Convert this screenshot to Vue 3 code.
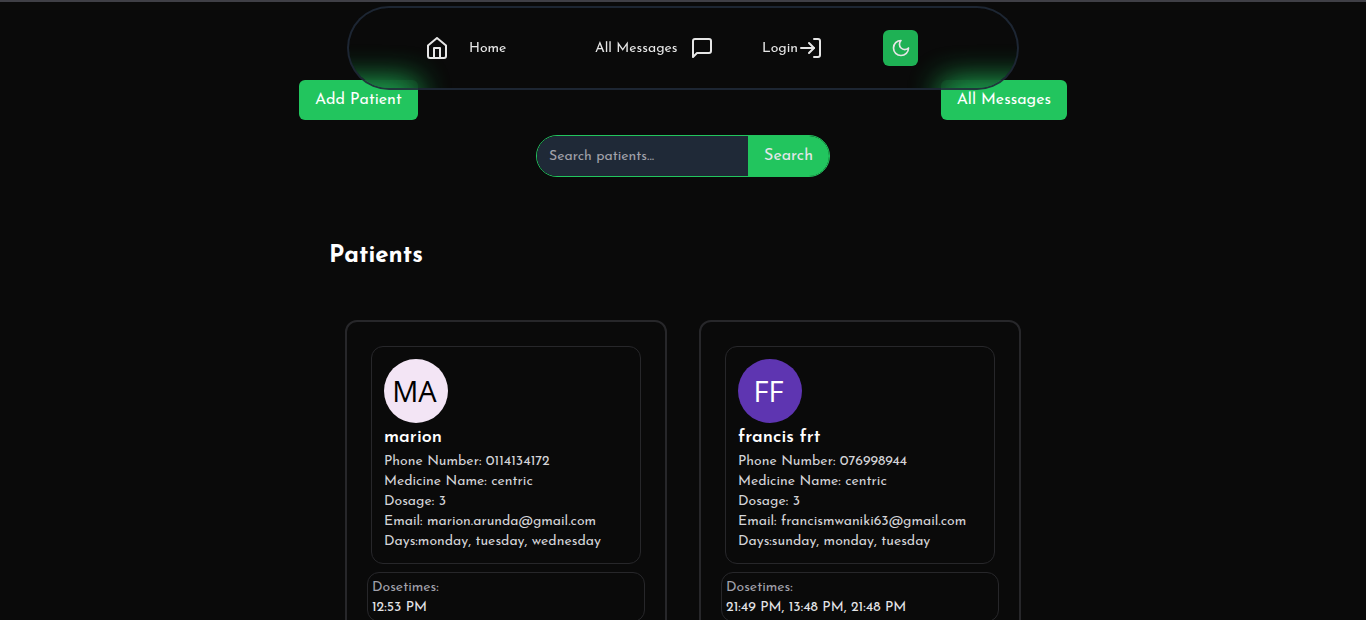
<script setup>
import { ref } from 'vue'

const query = ref('')

const patients = [
  {
    name: 'marion',
    initials: 'MA',
    tone: 'light',
    phone: '0114134172',
    medicine: 'centric',
    dosage: 3,
    email: 'marion.arunda@gmail.com',
    days: 'monday, tuesday, wednesday',
    times: '12:53 PM',
  },
  {
    name: 'francis frt',
    initials: 'FF',
    tone: 'violet',
    phone: '076998944',
    medicine: 'centric',
    dosage: 3,
    email: 'francismwaniki63@gmail.com',
    days: 'sunday, monday, tuesday',
    times: '21:49 PM, 13:48 PM, 21:48 PM',
  },
]
</script>

<template>
  <div class="page">
    <nav class="navbar">
      <a href="#" class="nav-link home">
        <svg class="icon" viewBox="0 0 24 24" aria-hidden="true">
          <path d="M3 9.500 12 2l9 7.500V20a2 2 0 0 1-2 2H5a2 2 0 0 1-2-2z" />
          <path d="M9 22V12h6v10" />
        </svg>
        <span>Home</span>
      </a>
      <a href="#" class="nav-link messages">
        <span>All Messages</span>
        <svg class="icon" viewBox="0 0 24 24" aria-hidden="true">
          <path d="M21 15a2 2 0 0 1-2 2H7l-4 4V5a2 2 0 0 1 2-2h14a2 2 0 0 1 2 2z" />
        </svg>
      </a>
      <a href="#" class="nav-link login">
        <span>Login</span>
        <svg class="icon" viewBox="0 0 24 24" aria-hidden="true">
          <path d="M15 3h4a2 2 0 0 1 2 2v14a2 2 0 0 1-2 2h-4" />
          <path d="m10 17 5-5-5-5" />
          <path d="M15 12H2" />
        </svg>
      </a>
      <button type="button" class="theme" aria-label="Toggle theme">
        <svg class="moon" viewBox="0 0 24 24" aria-hidden="true">
          <path d="M12 3a6 6 0 0 0 9 9 9 9 0 1 1-9-9Z" />
        </svg>
      </button>
    </nav>

    <div class="actions">
      <button type="button" class="action">Add Patient</button>
      <button type="button" class="action">All Messages</button>
    </div>

    <form class="search" @submit.prevent>
      <input v-model="query" type="text" placeholder="Search patients..." aria-label="Search patients" />
      <button type="submit">Search</button>
    </form>

    <main class="content">
      <h1>Patients</h1>
      <div class="grid">
        <article v-for="p in patients" :key="p.email" class="card">
          <div class="details">
            <div class="avatar" :class="p.tone">{{ p.initials }}</div>
            <h2>{{ p.name }}</h2>
            <p>Phone Number: {{ p.phone }}</p>
            <p>Medicine Name: {{ p.medicine }}</p>
            <p>Dosage: {{ p.dosage }}</p>
            <p>Email: {{ p.email }}</p>
            <p>Days:{{ p.days }}</p>
          </div>
          <div class="doses">
            <p class="label">Dosetimes:</p>
            <p>{{ p.times }}</p>
          </div>
        </article>
      </div>
    </main>
  </div>
</template>

<style>
body {
  background: #0a0a0a;
}
</style>

<style scoped>
* {
  box-sizing: border-box;
  margin: 0;
}
.page {
  height: 100vh;
  overflow: hidden;
  padding-top: 78px;
  border-top: 2px solid #3f3f46;
  background: #0a0a0a;
  color: #fff;
  font-family: "Josefin Sans", Lato, sans-serif;
  font-size: 14px;
  line-height: 20px;
}
button,
input {
  border: 0;
  color: inherit;
  font: inherit;
}
svg {
  fill: none;
  stroke: currentColor;
  stroke-width: 2;
  stroke-linecap: round;
  stroke-linejoin: round;
}
.navbar {
  position: fixed;
  z-index: 2;
  top: 6px;
  left: 0;
  right: 0;
  display: grid;
  grid-template-columns: 170fr 167fr 121fr 35fr;
  align-items: center;
  max-width: 672px;
  height: 84px;
  margin: 0 auto;
  padding: 0 99px 0 76px;
  overflow: hidden;
  border: 2px solid rgba(31, 41, 55, 0.9);
  border-radius: 42px;
  background: rgba(10, 10, 10, 0.9);
  background-clip: padding-box;
}
/* Soft green glow where the action buttons pass under the bar. */
.navbar::before {
  content: "";
  position: absolute;
  z-index: -1;
  top: 72px;
  left: -50px;
  right: -50px;
  height: 40px;
  background: linear-gradient(
    90deg,
    #22c55e 119px,
    transparent 119px calc(100% - 126px),
    #22c55e calc(100% - 126px)
  );
  filter: blur(16px);
  opacity: 0.9;
}
.nav-link {
  display: flex;
  align-items: center;
  color: #fff;
  text-decoration: none;
  white-space: nowrap;
  opacity: 0.9;
}
.nav-link span {
  padding-top: 2px;
}
.home {
  gap: 20px;
}
.messages {
  gap: 12px;
}
.login {
  gap: 1px;
}
.icon {
  flex: none;
  width: 24px;
  height: 24px;
}
.theme {
  display: grid;
  place-items: center;
  height: 36px;
  padding: 0;
  border-radius: 6px;
  background: #22c55e;
  opacity: 0.9;
}
.moon {
  width: 20px;
  height: 20px;
}
.actions {
  display: flex;
  justify-content: space-between;
  max-width: 768px;
  margin: 0 auto;
}
.action {
  padding: 8px 16px;
  border-radius: 6px;
  background: #22c55e;
  font-size: 16px;
  line-height: 24px;
}
.search {
  display: flex;
  width: 294px;
  height: 42px;
  margin: 15px auto 0;
  overflow: hidden;
  border: 1px solid #22c55e;
  border-radius: 21px;
}
.search input {
  flex: 1;
  min-width: 0;
  padding: 2px 12px 0;
  background: #1f2937;
  outline: 0;
}
.search input::placeholder {
  color: #a1a1aa;
  opacity: 1;
}
.search button {
  padding: 0 16px;
  background: #22c55e;
  color: #e5e7eb;
  font-size: 16px;
}
.content {
  max-width: 708px;
  margin: 63px auto 0;
}
h1 {
  font-size: 24px;
  line-height: 32px;
  font-weight: 700;
}
.grid {
  display: grid;
  grid-template-columns: 1fr 1fr;
  gap: 32px;
  padding: 48px 16px 0;
}
.card {
  padding: 24px;
  border: 2px solid #27272a;
  border-radius: 12px;
}
.details {
  padding: 12px 12px 11px;
  border: 1px solid #27272a;
  border-radius: 12px;
  color: #d4d4d8;
}
.avatar {
  display: grid;
  place-items: center;
  width: 64px;
  height: 64px;
  margin-bottom: 1px;
  padding-right: 3px;
  border-radius: 50%;
  font-family: "Open Sans", "Noto Sans", sans-serif;
  font-size: 29px;
}
.light {
  background: #f3e5f5;
  color: #000;
}
.violet {
  background: #5e35b1;
  color: #fff;
}
h2 {
  color: #fff;
  font-size: 18px;
  line-height: 28px;
  font-weight: 600;
}
.doses {
  margin: 8px -4px 0;
  padding: 5px 4px 3px;
  border: 1px solid #27272a;
  border-radius: 12px;
  color: #e4e4e7;
}
.label {
  color: #a1a1aa;
}
</style>
